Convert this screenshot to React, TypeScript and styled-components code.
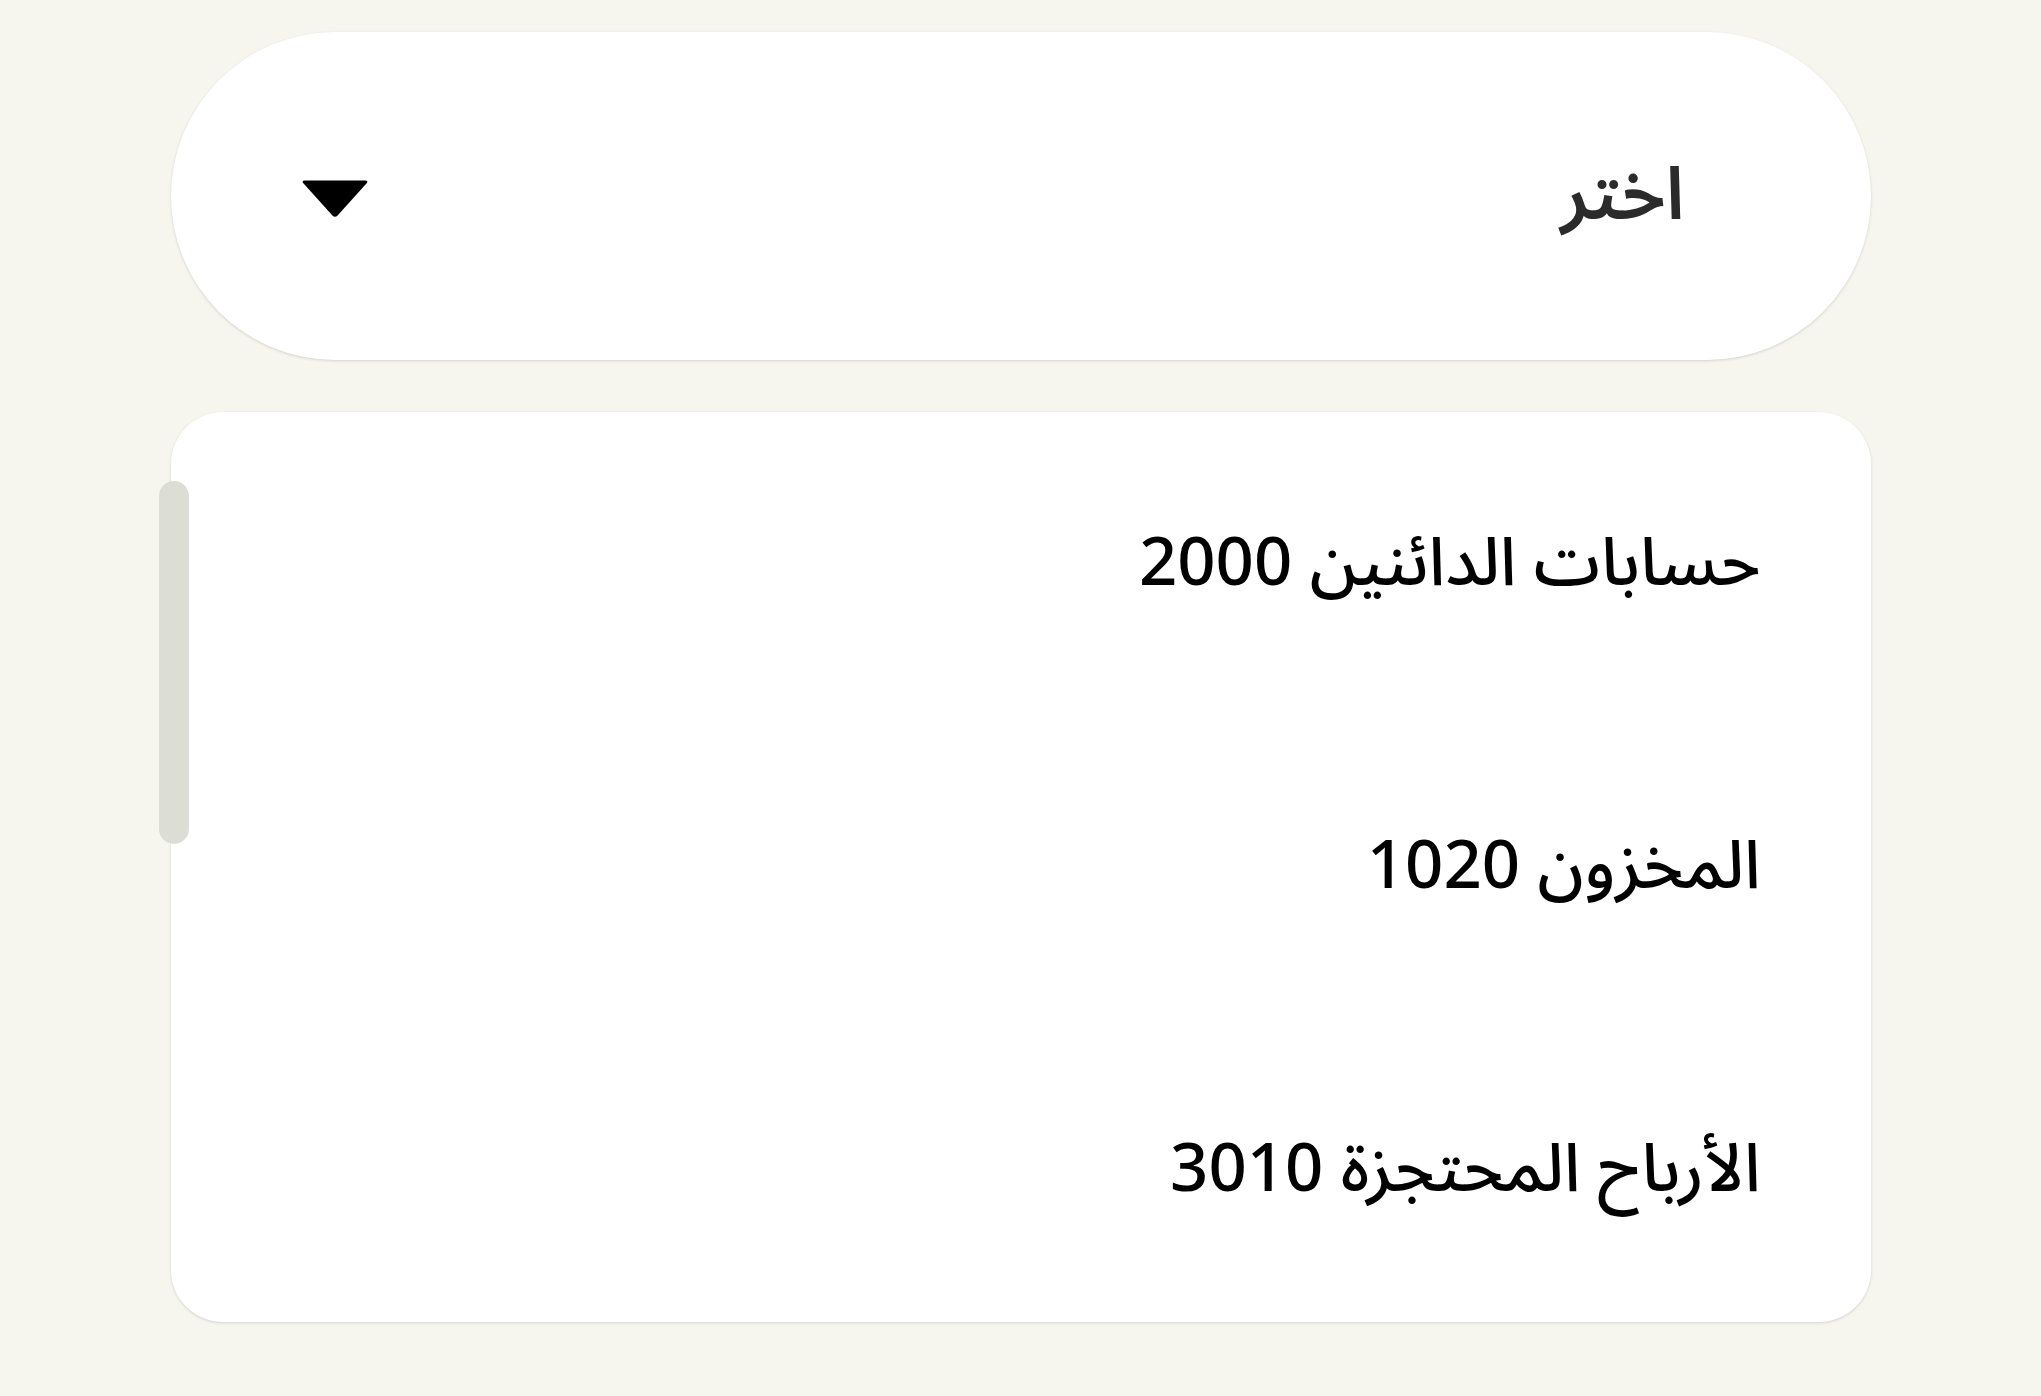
import styled, { createGlobalStyle } from "styled-components";

const GlobalStyle = createGlobalStyle`
  html, body {
    margin: 0;
    padding: 0;
    background: #f6f6ef;
  }
  body {
    font-family: "Noto Sans Arabic", "Noto Sans", "DejaVu Sans", sans-serif;
  }
`;

const Page = styled.div`
  width: 100%;
  min-height: 1396px;
  display: flex;
  justify-content: center;
  padding-top: 32px;
  box-sizing: border-box;
`;

const Column = styled.div`
  width: 1700px;
  display: flex;
  flex-direction: column;
  gap: 52px;
`;

const SelectBox = styled.div`
  height: 328px;
  border-radius: 164px;
  background: #ffffff;
  box-shadow: 0 1px 3px rgba(0, 0, 0, 0.14);
  display: flex;
  align-items: center;
  justify-content: space-between;
  padding: 0 186px 0 130px;
  box-sizing: border-box;
`;

const Placeholder = styled.span`
  font-size: 73px;
  font-weight: 600;
  color: #2b2b2b;
  line-height: 1;
`;

const Arrow = styled.svg`
  width: 68px;
  height: 38px;
  display: block;
  margin-top: 6px;
`;

const OptionList = styled.div`
  position: relative;
  height: 910px;
  border-radius: 52px;
  background: #ffffff;
  box-shadow: 0 1px 3px rgba(0, 0, 0, 0.14);
  display: flex;
  flex-direction: column;
`;

const Option = styled.div`
  height: 303px;
  display: flex;
  align-items: center;
  padding-right: 110px;
  font-size: 67px;
  font-weight: 500;
  color: #000000;
  cursor: pointer;
`;

const ScrollThumb = styled.div`
  position: absolute;
  left: -12px;
  top: 69px;
  width: 30px;
  height: 363px;
  border-radius: 15px;
  background: #dcddd5;
`;

const options = [
  "حسابات الدائنين 2000",
  "المخزون 1020",
  "الأرباح المحتجزة 3010",
];

export default function App() {
  return (
    <>
      <GlobalStyle />
      <Page dir="rtl">
        <Column>
          <SelectBox>
            <Placeholder>اختر</Placeholder>
            <Arrow viewBox="0 0 66 36">
              <path
                d="M4 0 H62 Q66 0 63.5 3 L35.5 34 Q33 36.5 30.5 34 L2.5 3 Q0 0 4 0 Z"
                fill="#000"
              />
            </Arrow>
          </SelectBox>
          <OptionList>
            <ScrollThumb />
            {options.map((o) => (
              <Option key={o}>{o}</Option>
            ))}
          </OptionList>
        </Column>
      </Page>
    </>
  );
}
